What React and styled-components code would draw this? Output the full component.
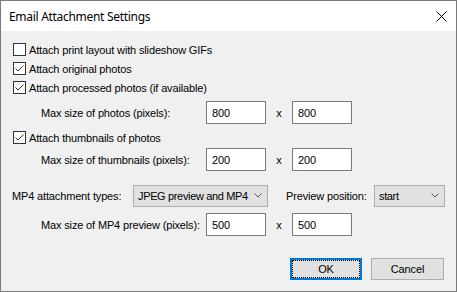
import React from "react";
import styled, { createGlobalStyle } from "styled-components";

const Global = createGlobalStyle`
  html, body { margin: 0; padding: 0; background: #ffffff; }
  * { box-sizing: border-box; }
`;

const Window = styled.div`
  width: 457px;
  height: 292px;
  border: 1px solid #7a7a7a;
  display: flex;
  flex-direction: column;
  background: #f0f0f0;
  font-family: "Liberation Sans", Arial, sans-serif;
  font-size: 11px;
  letter-spacing: -0.15px;
  color: #000;
`;

const TitleBar = styled.div`
  height: 30px;
  background: #ffffff;
  display: flex;
  align-items: center;
  justify-content: space-between;
  padding: 0 9px 0 8px;
  flex-shrink: 0;
`;

const Title = styled.span`
  font-family: "Noto Sans", "Open Sans", sans-serif;
  font-size: 12px;
  letter-spacing: -0.3px;
  color: #000;
  padding-top: 1px;
`;

const CloseIcon = styled.svg`
  width: 11px;
  height: 11px;
`;

const Body = styled.div`
  flex: 1;
  display: flex;
  flex-direction: column;
  padding: 9px 12px 0 11px;
`;

const CheckRow = styled.label`
  display: flex;
  align-items: center;
  height: 19px;
  margin-top: ${(p) => p.$mt || 0}px;
  padding-left: 1px;
  white-space: nowrap;
`;

const Box = styled.span`
  width: 13px;
  height: 13px;
  border: 1px solid #333333;
  background: #ffffff;
  display: inline-flex;
  align-items: center;
  justify-content: center;
  margin-right: 3px;
  flex-shrink: 0;
`;

const FieldRow = styled.div`
  display: flex;
  align-items: center;
  height: 23px;
  margin-top: ${(p) => p.$mt || 0}px;
`;

const Label = styled.span`
  width: ${(p) => p.$w}px;
  padding-left: ${(p) => p.$pl || 0}px;
  flex-shrink: 0;
  white-space: nowrap;
`;

const NumBox = styled.div`
  width: 60px;
  height: 23px;
  border: 1px solid #7a7a7a;
  background: #ffffff;
  display: flex;
  align-items: center;
  padding-left: 5px;
  flex-shrink: 0;
`;

const Times = styled.span`
  width: 26px;
  text-align: center;
  flex-shrink: 0;
`;

const Select = styled.div`
  width: ${(p) => p.$w}px;
  height: 22px;
  border: 1px solid #adadad;
  background: #e1e1e1;
  display: flex;
  align-items: center;
  justify-content: space-between;
  padding: 0 5px 0 4px;
  flex-shrink: 0;
  white-space: nowrap;
  overflow: hidden;
  letter-spacing: -0.35px;
`;

const Chevron = styled.svg`
  width: 8px;
  height: 5px;
  flex-shrink: 0;
`;

const ButtonBar = styled.div`
  display: flex;
  justify-content: flex-end;
  gap: 9px;
  margin-top: 22px;
`;

const Button = styled.div`
  width: ${(p) => p.$w}px;
  height: 22px;
  background: #e1e1e1;
  border: ${(p) => (p.$default ? "2px solid #0078d7" : "1px solid #adadad")};
  display: flex;
  align-items: center;
  justify-content: center;
`;

const Focus = styled.div`
  width: 100%;
  height: 100%;
  outline: 1px dotted #000;
  outline-offset: -1px;
  display: flex;
  align-items: center;
  justify-content: center;
`;

const Check = () => (
  <svg width="11" height="11" viewBox="0 0 11 11">
    <path d="M1.5 5.5 L4 8 L9.5 2.5" fill="none" stroke="#333" strokeWidth="1" />
  </svg>
);

const CheckItem = ({ checked, mt, children }) => (
  <CheckRow $mt={mt}>
    <Box>{checked && <Check />}</Box>
    {children}
  </CheckRow>
);

const ChevronIcon = () => (
  <Chevron viewBox="0 0 8 5">
    <path d="M0.5 0.5 L4 4 L7.5 0.5" fill="none" stroke="#555" strokeWidth="1" />
  </Chevron>
);

const SizeRow = ({ label, a, b, mt }) => (
  <FieldRow $mt={mt}>
    <Label $w={194} $pl={29}>{label}</Label>
    <NumBox>{a}</NumBox>
    <Times>x</Times>
    <NumBox>{b}</NumBox>
  </FieldRow>
);

export default function App() {
  return (
    <>
      <Global />
      <Window>
        <TitleBar>
          <Title>Email Attachment Settings</Title>
          <CloseIcon viewBox="0 0 11 11">
            <path d="M0.5 0.5 L10.5 10.5 M10.5 0.5 L0.5 10.5" stroke="#000" strokeWidth="1" />
          </CloseIcon>
        </TitleBar>
        <Body>
          <CheckItem>Attach print layout with slideshow GIFs</CheckItem>
          <CheckItem checked>Attach original photos</CheckItem>
          <CheckItem checked>Attach processed photos (if available)</CheckItem>
          <SizeRow label="Max size of photos (pixels):" a="800" b="800" mt={4} />
          <CheckItem checked mt={4}>Attach thumbnails of photos</CheckItem>
          <SizeRow label="Max size of thumbnails (pixels):" a="200" b="200" mt={1} />
          <FieldRow $mt={13}>
            <Label $w={121}>MP4 attachment types:</Label>
            <Select $w={135}>
              <span>JPEG preview and MP4</span>
              <ChevronIcon />
            </Select>
            <Label $w={106} $pl={18}>Preview position:</Label>
            <Select $w={71}>
              <span>start</span>
              <ChevronIcon />
            </Select>
          </FieldRow>
          <SizeRow label="Max size of MP4 preview (pixels):" a="500" b="500" mt={6} />
          <ButtonBar>
            <Button $w={72} $default>
              <Focus>OK</Focus>
            </Button>
            <Button $w={73}>Cancel</Button>
          </ButtonBar>
        </Body>
      </Window>
    </>
  );
}
